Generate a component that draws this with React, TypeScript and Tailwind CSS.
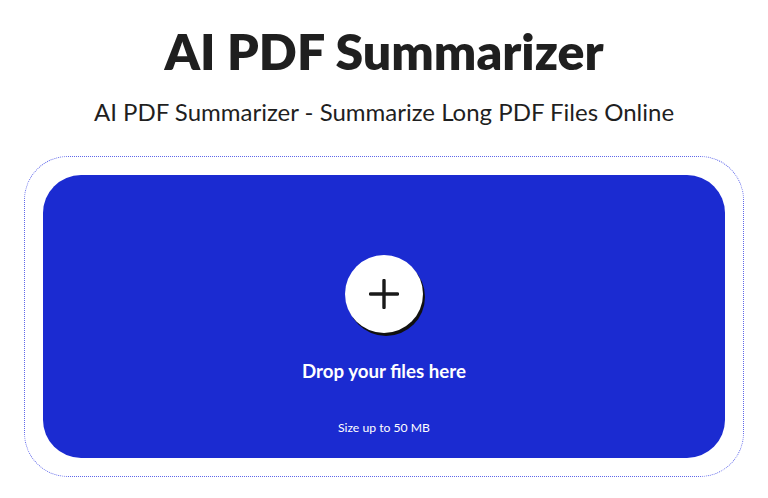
export default function App() {
  return (
    <div className="min-h-screen bg-white px-6 pt-[23px] font-['Lato',sans-serif]">
      <h1 className="text-center text-[50px] font-extrabold leading-[56px] text-[#1f1f1f]">
        AI PDF Summarizer
      </h1>
      <p className="mt-[18px] text-center text-[24px] leading-[30px] text-[#1f1f1f]">
        AI PDF Summarizer - Summarize Long PDF Files Online
      </p>

      <div className="mt-[29px] rounded-[44px] border border-dotted border-[#5f67ea] p-[18px]">
        <div className="flex h-[283px] flex-col items-center rounded-[38px] bg-[#1b2bd1] pt-[80px]">
          <button className="flex h-[78px] w-[78px] items-center justify-center rounded-full bg-white shadow-[2px_3px_0_#111]">
            <svg width="30" height="30" viewBox="0 0 30 30" fill="none">
              <path d="M15 1.5v27M1.5 15h27" stroke="#1a1a1a" strokeWidth="3.4" strokeLinecap="round" />
            </svg>
          </button>
          <p className="mt-[25px] text-[18.7px] font-bold leading-[26px] text-white">Drop your files here</p>
          <p className="mt-[36px] text-[12.2px] leading-[16px] text-white">Size up to 50 MB</p>
        </div>
      </div>
    </div>
  )
}
